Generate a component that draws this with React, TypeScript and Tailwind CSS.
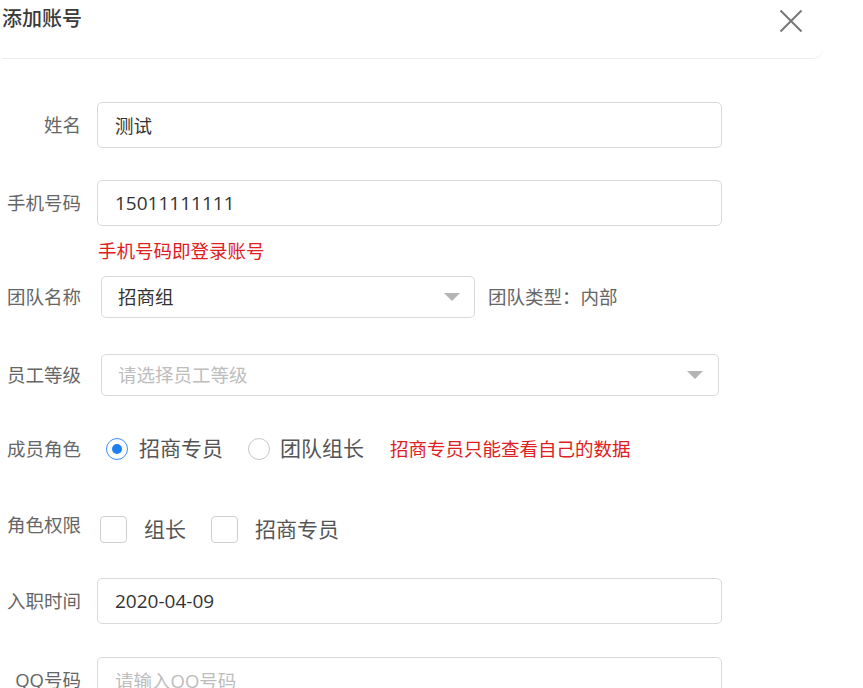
import React from 'react';

const font = { fontFamily: '"Open Sans", "Noto Sans CJK SC", sans-serif' };

function Label({ children, className = '' }: { children: React.ReactNode; className?: string }) {
  return (
    <div className={`w-[79px] shrink-0 text-right text-[18.5px] text-[#666] whitespace-nowrap ${className}`}>
      {children}
    </div>
  );
}

function Arrow() {
  return (
    <svg width="16" height="8" viewBox="0 0 16 8" className="shrink-0">
      <path d="M0 0 H16 L8 8 Z" fill="#b4b4b4" />
    </svg>
  );
}

export default function App() {
  return (
    <div className="w-[863px] h-[688px] overflow-hidden bg-white px-[2px]" style={font}>
      <div className="w-[821px] h-[59px] flex items-start justify-between border-b border-[#ededed] rounded-br-[10px]">
        <h2 className="pt-[5px] text-[20px] font-medium text-[#3a3a3a] leading-[28px]">添加账号</h2>
        <button className="mt-[9px] mr-[20px] text-[#777]">
          <svg width="24" height="24" viewBox="0 0 24 24" fill="none" stroke="currentColor" strokeWidth="2">
            <path d="M1.5 1.5 L22.5 22.5 M22.5 1.5 L1.5 22.5" />
          </svg>
        </button>
      </div>

      <div className="flex flex-col">
        <div className="flex items-center mt-[43px]">
          <Label>姓名</Label>
          <input
            className="ml-[16px] w-[625px] h-[46px] border border-[#d9d9d9] rounded-[5px] px-[17px] text-[18.5px] text-[#333] outline-none"
            defaultValue="测试"
          />
        </div>

        <div className="flex items-center mt-[32px]">
          <Label>手机号码</Label>
          <input
            className="ml-[16px] w-[625px] h-[46px] border border-[#d9d9d9] rounded-[5px] px-[17px] text-[19px] text-[#333] outline-none"
            defaultValue="15011111111"
          />
        </div>
        <div className="h-[50px] flex items-center pl-[96px] text-[18.5px] text-[#e02020]">手机号码即登录账号</div>

        <div className="flex items-center">
          <Label>团队名称</Label>
          <div className="ml-[20px] w-[374px] h-[42px] border border-[#d9d9d9] rounded-[5px] pl-[16px] pr-[14px] flex items-center justify-between">
            <span className="text-[18.5px] text-[#333]">招商组</span>
            <Arrow />
          </div>
          <span className="ml-[13px] text-[18.5px] text-[#666]">团队类型：内部</span>
        </div>

        <div className="flex items-center mt-[36px]">
          <Label>员工等级</Label>
          <div className="ml-[20px] w-[618px] h-[42px] border border-[#d9d9d9] rounded-[5px] pl-[16px] pr-[15px] flex items-center justify-between">
            <span className="text-[18.5px] text-[#bdbdbd]">请选择员工等级</span>
            <Arrow />
          </div>
        </div>

        <div className="flex items-center mt-[38px] h-[30px]">
          <Label>成员角色</Label>
          <label className="ml-[25px] flex items-center">
            <span className="w-[22px] h-[22px] rounded-full border-[1.5px] border-[#3d8ef5] flex items-center justify-center">
              <span className="w-[10px] h-[10px] rounded-full bg-[#1f7ef0]" />
            </span>
            <span className="ml-[11px] text-[21px] text-[#555]">招商专员</span>
          </label>
          <label className="ml-[25px] flex items-center">
            <span className="w-[22px] h-[22px] rounded-full border-[1.5px] border-[#c8c8c8]" />
            <span className="ml-[10px] text-[21px] text-[#555]">团队组长</span>
          </label>
          <span className="ml-[26px] text-[18.5px] text-[#e02020]">招商专员只能查看自己的数据</span>
        </div>

        <div className="flex items-center mt-[52px] h-[27px]">
          <Label className="pb-[9px]">角色权限</Label>
          <span className="ml-[19px] w-[27px] h-[27px] rounded-[4px] border border-[#cfcfcf]" />
          <span className="ml-[17px] text-[21px] text-[#555]">组长</span>
          <span className="ml-[25px] w-[27px] h-[27px] rounded-[4px] border border-[#cfcfcf]" />
          <span className="ml-[17px] text-[21px] text-[#555]">招商专员</span>
        </div>

        <div className="flex items-center mt-[35px]">
          <Label>入职时间</Label>
          <input
            className="ml-[16px] w-[625px] h-[46px] border border-[#d9d9d9] rounded-[5px] px-[17px] text-[19px] text-[#333] outline-none"
            defaultValue="2020-04-09"
          />
        </div>

        <div className="flex items-center mt-[33px]">
          <Label>QQ号码</Label>
          <input
            className="ml-[16px] w-[625px] h-[46px] border border-[#d9d9d9] rounded-[5px] px-[17px] text-[18.5px] text-[#333] placeholder:text-[#bdbdbd] outline-none"
            placeholder="请输入QQ号码"
          />
        </div>
      </div>
    </div>
  );
}
